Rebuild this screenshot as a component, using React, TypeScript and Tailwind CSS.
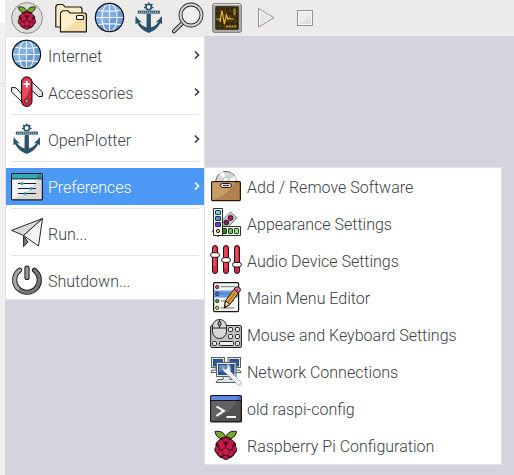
import type { ReactNode } from "react";

function Icon({ children }: { children: ReactNode }) {
  return (
    <svg viewBox="0 0 32 32" className="size-8 shrink-0" aria-hidden="true">
      {children}
    </svg>
  );
}

function Berry() {
  return (
    <g stroke="#1b1016" strokeWidth="1" strokeLinejoin="round">
      <path d="M15.7 9.5C12 10.5 6.5 9.8 5 2.6C9.5 1.5 15 3 15.7 9.5Z" fill="#75a928" />
      <path d="M15.7 9.5C19.5 10.5 25 9.8 26.5 2.6C22 1.5 16.5 3 15.7 9.5Z" fill="#75a928" />
      <path d="M15.7 8.2C19 8.2 21 9.5 22.5 11.5C25 13 26 15 25.5 17.5C27.3 20 26.8 22.8 24.5 24.5C23.5 27 21.5 28.6 19 29C17 30.9 14.5 30.9 12.5 29C10 28.6 8 27 7 24.5C4.7 22.8 4.2 20 6 17.5C5.5 15 6.5 13 9 11.5C10.5 9.5 12.5 8.2 15.7 8.2Z" fill="#4a0a1c" />
      <g fill="#c51a4a" stroke="none">
        <ellipse cx="15.7" cy="10.9" rx="3" ry="1.9" />
        <ellipse cx="10.6" cy="13.6" rx="3" ry="2.2" transform="rotate(-35 10.6 13.6)" />
        <ellipse cx="20.8" cy="13.6" rx="3" ry="2.2" transform="rotate(35 20.8 13.6)" />
        <ellipse cx="12.1" cy="17.4" rx="3.1" ry="2.7" transform="rotate(-40 12.1 17.4)" />
        <ellipse cx="19.3" cy="17.4" rx="3.1" ry="2.7" transform="rotate(40 19.3 17.4)" />
        <ellipse cx="7.1" cy="20.3" rx="1.6" ry="2.9" />
        <ellipse cx="24.3" cy="20.3" rx="1.6" ry="2.9" />
        <circle cx="15.7" cy="22.8" r="3.2" />
        <ellipse cx="10.3" cy="24.2" rx="2.2" ry="3" transform="rotate(-30 10.3 24.2)" />
        <ellipse cx="21.1" cy="24.2" rx="2.2" ry="3" transform="rotate(30 21.1 24.2)" />
        <ellipse cx="15.7" cy="28.4" rx="2.9" ry="1.4" />
      </g>
    </g>
  );
}

function RaspberryIcon() {
  return <Icon><Berry /></Icon>;
}

function LogoIcon() {
  return (
    <Icon>
      <circle cx="16" cy="16" r="15.4" fill="#dedede" stroke="#8b8b8b" strokeWidth="1" />
      <path d="M4 25A15 15 0 0 1 25 4A15 15 0 0 0 4 25Z" fill="#eeeeee" />
      <g transform="translate(3.3 3) scale(0.8)"><Berry /></g>
    </Icon>
  );
}

function FoldersIcon() {
  return (
    <Icon>
      <g stroke="#1c1a14" strokeWidth="1.2" strokeLinejoin="round">
        <path d="M.8 25V4.500L2.500 2.500H8L10 5H25.500L27 6.500V25Z" fill="#f9edc3" />
        <path d="M5.500 29.800V11L7.500 8.800H13L15 11H30L31.400 12.500V29.800Z" fill="#f4dfa5" />
        <path d="M6.300 29V11.500L7.800 9.600H12.600L14.700 12H24Q20 24 6.300 29Z" fill="#fbf0cb" stroke="none" />
        <rect x="21.500" y="13.500" width="7" height="4" rx="1" fill="#fff" />
      </g>
    </Icon>
  );
}

function GlobeIcon() {
  return (
    <Icon>
      <circle cx="15.5" cy="15.5" r="14" fill="#6d9bd3" />
      <path d="M4 24A14 14 0 0 1 26 6Q20 19 4 24Z" fill="#82afe3" />
      <g fill="none" stroke="#f3f8ff" strokeWidth="1.1">
        <path d="M15.500 1.500V29.500M1.500 15.500H29.500M3.800 8.200Q15.500 10.500 27.200 8.200M3.800 22.800Q15.500 20.500 27.200 22.800" />
        <ellipse cx="15.5" cy="15.5" rx="7.6" ry="14" />
      </g>
      <circle cx="15.5" cy="15.5" r="14.1" fill="none" stroke="#10161f" strokeWidth="1.2" />
    </Icon>
  );
}

function AnchorIcon() {
  return (
    <Icon>
      <g fill="#28536a">
        <path d="M13.700 12H17.800L18 25.500Q23 24 25.500 19.800L22.500 20.500Q26.500 17.500 28.800 14Q29.200 18.500 29 22.500L27.400 21Q24 28 15.700 31Q7.500 28 4.100 21L2.500 22.500Q2.200 18 2.700 14Q5 17.500 9 20.500L6 19.800Q8.500 24 13.500 25.500Z" />
        <rect x="4.800" y="8.600" width="22" height="3" />
      </g>
      <circle cx="15.7" cy="5" r="2.7" fill="none" stroke="#28536a" strokeWidth="1.6" />
      <path d="M15.700 .4V3M12 2L13.800 3.800M19.400 2L17.600 3.800M11 5.500H13M18.500 5.500H20.500" stroke="#28536a" strokeWidth="1.5" />
      <path d="M6 10.100H26" stroke="#b7c6cf" strokeWidth="1.2" strokeDasharray="1.3 .7" />
    </Icon>
  );
}

function SearchIcon() {
  return (
    <Icon>
      <path d="M10.500 21L2 29.300" stroke="#222" strokeWidth="4" strokeLinecap="round" />
      <path d="M10.500 21L2 29.300" stroke="#c9c9c9" strokeWidth="2.2" strokeLinecap="round" />
      <circle cx="19" cy="13" r="10.5" fill="#efefef" stroke="#222" strokeWidth="3.8" />
      <circle cx="19" cy="13" r="10.5" fill="none" stroke="#d3d3d3" strokeWidth="2.1" />
    </Icon>
  );
}

function TaskIcon() {
  return (
    <Icon>
      <rect x="1.5" y="1.5" width="29" height="29" rx="2.5" fill="#aaa9a6" stroke="#888783" />
      <path d="M3 2.500H29" stroke="#ddd" />
      <rect x="4.5" y="4.5" width="23" height="23" rx="1" fill="#342708" stroke="#45423a" />
      <path d="M9 5V27M14 5V27M19 5V27M24 5V27M5 9H27M5 14H27M5 19H27M5 24H27" stroke="#665015" strokeWidth=".6" />
      <path d="M5.500 17H8L9.200 19L11 8.500L13.300 22L15.500 13L17 17.500L18.500 16L20 17H23" fill="none" stroke="#e7b72c" strokeWidth="1.2" />
      <path d="M23.500 6.500V13" stroke="#9a7a20" strokeWidth="2.5" />
      <path d="M15 24.500H26" stroke="#c69825" strokeWidth="2.2" strokeDasharray="2 .7" />
    </Icon>
  );
}

function PlayIcon() {
  return (
    <Icon>
      <path d="M8.500 6.500V25L24 15.700Z" fill="#e4e6e3" stroke="#949494" strokeLinejoin="round" />
      <path d="M9.600 8.500V23L21.800 15.700Z" fill="none" stroke="#fafafa" />
    </Icon>
  );
}

function StopIcon() {
  return (
    <Icon>
      <rect x="8.5" y="8.5" width="15" height="15" fill="#dfe1de" stroke="#949494" />
      <rect x="9.5" y="9.5" width="13" height="13" fill="none" stroke="#fafafa" />
      <path d="M10 22V10H22Q20 18 10 22Z" fill="#eceeeb" />
    </Icon>
  );
}

function KnifeIcon() {
  return (
    <Icon>
      <g stroke="#151515" strokeWidth="1" strokeLinejoin="round">
        <path d="M.6 11.500L5 11.800L12 19.500V27L.6 16Z" fill="#f4f4f4" />
        <path d="M20 5L31.400 16V20.500H27.500L19 13Z" fill="#e6e6e6" />
        <rect x="10.5" y=".8" width="10.5" height="29.700" rx="5.2" fill="#c9243c" />
      </g>
      <path d="M11.300 25V6.500A4.700 4.700 0 0 1 20 5Q20 17 11.300 25Z" fill="#e94b5d" />
      <path d="M15.700 5V11.500M12.500 8.200H19" stroke="#fff" strokeWidth="1.8" />
      <circle cx="15.700" cy="25" r="1.600" fill="#bbb" stroke="#222" strokeWidth=".7" />
    </Icon>
  );
}

function PreferencesIcon() {
  return (
    <Icon>
      <rect x=".6" y="3.600" width="30.800" height="26.300" rx="1" fill="#d9d9d9" stroke="#151b20" strokeWidth="1.2" />
      <path d="M1.200 29.300V9H27Q20 22 1.200 29.300Z" fill="#f5f5f5" />
      <path d="M1.200 4.200H30.800V8.500H1.200Z" fill="#1c8a9d" />
      <path d="M1.200 4.200H28L25 8.500H1.200Z" fill="#35aaba" />
      <path d="M1 8.900H31M7 13.500H25M7 18.500H25M7 23.500H25" stroke="#151b20" />
      <g fill="#2ba2b5">
        <circle cx="11" cy="13.5" r="1.600" /><circle cx="20" cy="18.5" r="1.600" /><circle cx="14" cy="23.5" r="1.600" />
      </g>
    </Icon>
  );
}

function PlaneIcon() {
  return (
    <Icon>
      <g stroke="#262626" strokeWidth="1" strokeLinejoin="round">
        <path d="M12.600 18.500V29.600L17 25Z" fill="#777" />
        <path d="M31.500 1.500L.6 13.400L12.600 18.500Z" fill="#dadada" />
        <path d="M31.500 1.500L12.600 18.500L27.500 29Z" fill="#f4f4f4" />
      </g>
    </Icon>
  );
}

function PowerIcon() {
  return (
    <Icon>
      <g fill="none" strokeLinecap="round">
        <path d="M8.500 6.200A12.300 12.300 0 1 0 23.500 6.200" stroke="#181818" strokeWidth="5.2" />
        <path d="M8.500 6.200A12.300 12.300 0 1 0 23.500 6.200" stroke="#777" strokeWidth="3.3" />
        <path d="M8.500 6.200A12.300 12.300 0 0 0 7 24.500" stroke="#a5a5a5" strokeWidth="3" />
        <path d="M16 4.200V13.500" stroke="#181818" strokeWidth="5.2" />
        <path d="M16 4.200V13.500" stroke="#9a9a9a" strokeWidth="3.2" />
      </g>
    </Icon>
  );
}

function SoftwareIcon() {
  return (
    <Icon>
      <circle cx="16" cy="11.700" r="10.300" fill="#d5d5d8" stroke="#666" />
      <path d="M16 11L9 3.500A10 10 0 0 1 14 1.700ZM16 11L25 6A10 10 0 0 1 26 11Z" fill="#f7f7fc" />
      <path d="M16 11L20 2.500L24 5Z" fill="#c4d5db" />
      <circle cx="16" cy="10" r="3" fill="#eee" stroke="#aaa" strokeWidth=".7" />
      <rect x="1.600" y="11.600" width="28.800" height="19" rx="1" fill="#b2824e" stroke="#24180e" strokeWidth="1.2" />
      <path d="M2.300 30V12.300H25Q19 25 2.300 30Z" fill="#c99b65" />
      <rect x="10.500" y="13.500" width="11" height="4" rx="2" fill="#ddd" stroke="#24180e" />
      <path d="M13 15.500H19" stroke="#333" />
    </Icon>
  );
}

function AppearanceIcon() {
  return (
    <Icon>
      <g stroke="#171717" strokeWidth=".9" strokeLinejoin="round">
        <path d="M2 24L8 18L14 24L8 30Z" fill="#ccc" stroke="#777" />
        <path d="M20.500 5L27 11L16.500 21.500L10 15.500Z" fill="#c8c8c8" stroke="#777" />
        <rect x="11" y="19.500" width="19.500" height="9" fill="#f4f4f4" />
        <rect x="3.500" y="1.500" width="9" height="27" fill="#f4f4f4" />
        <rect x="5.500" y="3.500" width="5" height="4" rx=".6" fill="#58dff0" />
        <rect x="5.500" y="9.500" width="5" height="4" rx=".6" fill="#4b91ed" />
        <rect x="5.500" y="15.500" width="5" height="4" rx=".6" fill="#6544cf" />
        <circle cx="20.500" cy="11" r="2.400" fill="#c31355" />
        <circle cx="16.300" cy="15.500" r="2.400" fill="#8b1759" />
        <rect x="12.500" y="21.500" width="4" height="5" rx=".6" fill="#2f861f" />
        <rect x="18.500" y="21.500" width="4" height="5" rx=".6" fill="#4dda3c" />
        <rect x="24.500" y="21.500" width="4" height="5" rx=".6" fill="#82fa70" />
        <circle cx="8" cy="24" r="1.700" fill="#e4c05d" />
      </g>
    </Icon>
  );
}

function AudioIcon() {
  return (
    <Icon>
      <g stroke="#241014" strokeWidth="1">
        <rect x="2.500" y="1.500" width="5" height="28" rx="2.500" fill="#d82a42" />
        <rect x="13.500" y="1.500" width="5" height="28" rx="2.500" fill="#d82a42" />
        <rect x="24.500" y="1.500" width="5" height="28" rx="2.500" fill="#d82a42" />
        <path d="M4.500 3.500V22M15.500 3.500V24M26.500 3.500V18" stroke="#f04c5e" strokeWidth="2.200" />
        <rect x=".6" y="8.700" width="8.800" height="4.600" rx="2.300" fill="#fff" />
        <rect x="11.600" y="13.700" width="8.800" height="4.600" rx="2.300" fill="#fff" />
        <rect x="22.600" y="18.400" width="8.800" height="4.600" rx="2.300" fill="#fff" />
      </g>
    </Icon>
  );
}

function EditorIcon() {
  return (
    <Icon>
      <rect x="3.600" y="1.600" width="25" height="29" rx="1" fill="#f3f3f3" stroke="#181818" strokeWidth="1.2" />
      <path d="M4.200 9.500H28V16.500H4.200Z" fill="#5a9ded" />
      <path d="M10.500 5.700H25M10.500 12.700H25M10.500 20H24M10.500 27H24" stroke="#777" />
      <g stroke="#222" strokeWidth=".8">
        <circle cx="7.200" cy="6" r="1.700" fill="#e0524b" /><circle cx="7.200" cy="12.900" r="1.700" fill="#8150ca" />
        <circle cx="7.200" cy="20" r="1.700" fill="#32a934" /><circle cx="7.200" cy="26.800" r="1.700" fill="#d2d33b" />
      </g>
      <g stroke="#211c17" strokeWidth="1" strokeLinejoin="round">
        <path d="M14.300 27L15.500 19.800L24 8.300L28.600 11.700L20 23.300Z" fill="#df9d34" />
        <path d="M14.300 27L15.500 19.800L20 23.300Z" fill="#efd3aa" />
        <path d="M24 8.300L25.500 6.200Q27.500 5 30 7.300Q31.300 8.700 30.300 9.700L28.600 11.700Z" fill="#cc67ae" />
        <path d="M18 21.500L26 10.500" stroke="#84551d" strokeWidth=".8" />
      </g>
      <path d="M14.300 27L14.800 24.200L16.600 25.500Z" fill="#111" />
    </Icon>
  );
}

function MouseIcon() {
  return (
    <Icon>
      <g stroke="#202020" strokeWidth="1">
        <rect x=".6" y="7.500" width="30.800" height="22" rx="1.5" fill="#c1c1c1" />
        <g fill="#ededed">
          <rect x="18.500" y="9.500" width="4" height="4" rx="1.200" /><rect x="25.500" y="9.500" width="4" height="4" rx="1.200" />
          <rect x="18.500" y="16.500" width="4" height="4" rx="1.200" /><rect x="25.500" y="16.500" width="4" height="4" rx="1.200" />
          <rect x="2.500" y="23.500" width="4" height="4" rx="1.200" /><rect x="9.500" y="23.500" width="14" height="4" rx="1" />
          <rect x="25.500" y="23.500" width="4" height="4" rx="1.200" />
        </g>
        <path d="M2.500 8.500A7 7 0 0 1 16.500 8.500V13.500A7 7 0 0 1 2.500 13.500Z" fill="#d8d8d8" />
        <path d="M2.500 10H16.500M9.500 1.500V10" fill="none" />
        <ellipse cx="9.500" cy="5.700" rx="1.500" ry="2.500" fill="#999" />
      </g>
    </Icon>
  );
}

function NetworkIcon() {
  return (
    <Icon>
      <g stroke="#596168" strokeWidth="1">
        <g fill="#e6e8e9">
          <rect x="1.500" y="2.500" width="13" height="10" /><rect x="18" y="2.500" width="12.500" height="10" />
          <path d="M4.500 13H8V15H2L1 17.500H9V13M25 13V15H29.500L31 17.500H24V13Z" />
        </g>
        <g fill="#2458a0" stroke="#183967" strokeWidth=".8">
          <rect x="3.500" y="4.500" width="9" height="6.500" /><rect x="20" y="4.500" width="8.500" height="6.500" />
        </g>
        <rect x="6.500" y="7.500" width="19.500" height="14" fill="#e6e8e9" />
        <rect x="8.500" y="9.500" width="15.500" height="10" fill="#2458a0" stroke="#183967" strokeWidth=".8" />
        <path d="M13 21.500H20V24.500H25L27 27.500H6L8 24.500H13Z" fill="#e2e4e3" />
      </g>
      <path d="M9 10H22L9 17Z" fill="#5b8ccb" />
      <path d="M13 11Q11.500 16 16 18L28 30Q30.500 32 31.500 29Q31 27 29.500 25.500L20.500 16.500Q21 11 17.500 9V13L15.500 14.500L13 13Z" fill="#f0f1f1" stroke="#a6abac" strokeWidth=".8" />
    </Icon>
  );
}

function TerminalIcon() {
  return (
    <Icon>
      <rect x=".6" y="3.600" width="30.800" height="26.300" rx="1" fill="#505050" stroke="#171717" strokeWidth="1.2" />
      <path d="M1.200 29.300V8.500H27Q20 22 1.200 29.300Z" fill="#626262" />
      <path d="M1.200 4.200H30.800V8H1.200Z" fill="#4e6fc5" />
      <path d="M1.200 4.200H29L26 8H1.200Z" fill="#6288e4" />
      <path d="M1 8.500H31" stroke="#171717" />
      <path d="M6.500 14.500L13.800 18.800L6.500 23.800M16.500 25H26" fill="none" stroke="#fff" strokeWidth="2" />
    </Icon>
  );
}

const launchers = [
  { name: "File Manager", icon: <FoldersIcon /> },
  { name: "Web Browser", icon: <GlobeIcon /> },
  { name: "OpenPlotter", icon: <AnchorIcon /> },
  { name: "Search", icon: <SearchIcon /> },
  { name: "Task Manager", icon: <TaskIcon /> },
  { name: "Play", icon: <PlayIcon /> },
  { name: "Stop", icon: <StopIcon /> },
];

const preferences = [
  { label: "Add / Remove Software", icon: <SoftwareIcon /> },
  { label: "Appearance Settings", icon: <AppearanceIcon /> },
  { label: "Audio Device Settings", icon: <AudioIcon /> },
  { label: "Main Menu Editor", icon: <EditorIcon /> },
  { label: "Mouse and Keyboard Settings", icon: <MouseIcon /> },
  { label: "Network Connections", icon: <NetworkIcon /> },
  { label: "old raspi-config", icon: <TerminalIcon /> },
  { label: "Raspberry Pi Configuration", icon: <RaspberryIcon /> },
];

type ItemProps = { icon: ReactNode; label: string; arrow?: boolean; active?: boolean };

function MenuItem({ icon, label, arrow = false, active = false }: ItemProps) {
  return (
    <button
      type="button"
      role="menuitem"
      aria-haspopup={arrow ? "menu" : undefined}
      aria-expanded={arrow ? active : undefined}
      className={`flex w-full items-center gap-[5px] pt-[2px] pr-[3px] pb-[3px] pl-[5px] text-left leading-5 whitespace-nowrap ${active ? "bg-[#4c98f5] text-white" : "text-[#3b4043]"}`}
    >
      {icon}
      <span className="grow pt-1">{label}</span>
      {arrow && (
        <svg viewBox="0 0 8 10" className="h-2.5 w-2 shrink-0" fill="none" stroke="currentColor" strokeWidth="1.7" aria-hidden="true">
          <path d="M2 1.500L5.500 5L2 8.500" />
        </svg>
      )}
    </button>
  );
}

function Separator() {
  return <hr className="mx-[5px] mt-[3px] mb-1.5 border-0 border-t border-[#e4e4e4]" />;
}

export default function App() {
  return (
    <div className="flex min-h-screen bg-[#d6d3de] font-['Roboto',sans-serif] text-base font-light">
      <div className="flex w-[5px] shrink-0 flex-col bg-[#f0f0f0]">
        <div className="h-[23px] bg-white" />
        <div className="h-[61px] border-b border-[#dcdcdc]" />
      </div>
      <div className="min-w-0 grow">
        <header className="flex h-9 items-center gap-3 bg-[#edebea] pl-1.5">
          <button type="button" aria-label="Menu"><LogoIcon /></button>
          <div className="flex gap-[7px]">
            {launchers.map((item) => (
              <button key={item.name} type="button" aria-label={item.name}>{item.icon}</button>
            ))}
          </div>
        </header>
        <div role="menu" aria-label="Applications" className="w-[200px] border border-[#e3e1e6] bg-white">
          <MenuItem icon={<GlobeIcon />} label="Internet" arrow />
          <MenuItem icon={<KnifeIcon />} label="Accessories" arrow />
          <Separator />
          <MenuItem icon={<AnchorIcon />} label="OpenPlotter" arrow />
          <Separator />
          <div className="relative">
            <MenuItem icon={<PreferencesIcon />} label="Preferences" arrow active />
            <div role="menu" aria-label="Preferences" className="absolute -top-px left-full w-[298px] border border-[#e3e1e6] bg-white">
              {preferences.map((item) => (
                <MenuItem key={item.label} icon={item.icon} label={item.label} />
              ))}
            </div>
          </div>
          <Separator />
          <MenuItem icon={<PlaneIcon />} label="Run..." />
          <Separator />
          <MenuItem icon={<PowerIcon />} label="Shutdown..." />
        </div>
      </div>
    </div>
  );
}
